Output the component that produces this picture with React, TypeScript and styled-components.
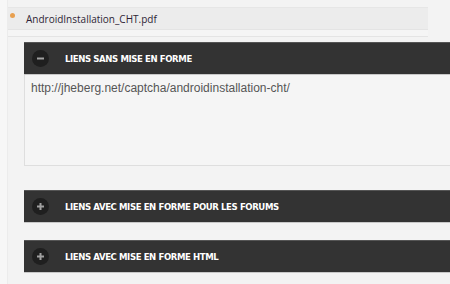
import styled, { createGlobalStyle } from "styled-components";

const GlobalStyle = createGlobalStyle`
    html, body {
        margin: 0;
        padding: 0;
        background: #f3f3f3;
        overflow: hidden;
    }
`;

const Page = styled.div`
    width: 450px;
    height: 284px;
    display: flex;
    background: #f3f3f3;
`;

const Gutter = styled.div`
    width: 7px;
    flex-shrink: 0;
    background: #f7f7f7;
    border-right: 1px solid #ececec;
`;

const Main = styled.div`
    flex: 1;
    display: flex;
    flex-direction: column;
    padding-top: 7px;
`;

const FileRow = styled.div`
    width: 420px;
    height: 21px;
    display: flex;
    align-items: center;
    background: #ececec;
    border-top: 1px solid #e6e6e6;
`;

const Dot = styled.span`
    width: 5px;
    height: 5px;
    border-radius: 50%;
    background: #e8a050;
    margin: 0 11px 0 2px;
    align-self: flex-start;
    margin-top: 5px;
`;

const FileName = styled.span`
    font-family: "Open Sans", sans-serif;
    font-size: 10px;
    color: #2e1f35;
`;

const Strip = styled.div`
    width: 420px;
    height: 6px;
    border-top: 1px solid #e4e4e4;
    border-bottom: 1px solid #e4e4e4;
    background: #f5f5f5;
`;

const Sections = styled.div`
    display: flex;
    flex-direction: column;
    padding-left: 16px;
    padding-top: 5px;
`;

const Header = styled.div<{ $gap?: number }>`
    height: 31px;
    display: flex;
    align-items: center;
    background: #333333;
    border-top: 1px solid #555;
    border-bottom: 1px solid #c8c8c8;
    margin-top: ${(p) => p.$gap ?? 0}px;
`;

const Toggle = styled.span`
    width: 17px;
    height: 17px;
    border-radius: 50%;
    background: #1f1f1f;
    display: flex;
    align-items: center;
    justify-content: center;
    margin: 0 16px 0 8px;
`;

const Title = styled.span`
    font-family: "DejaVu Sans Condensed", "DejaVu Sans", sans-serif;
    font-weight: bold;
    font-size: 9.5px;
    letter-spacing: -0.4px;
    color: #ffffff;
`;

const LinkBox = styled.div`
    height: 78px;
    background: #f5f5f5;
    border-left: 1px solid #dedede;
    border-bottom: 1px solid #dedede;
    padding: 6px 6px;
    font-family: "Liberation Sans", Arial, sans-serif;
    font-size: 12px;
    color: #555555;
`;

function Minus() {
    return (
        <svg width="9" height="9" viewBox="0 0 9 9">
            <rect x="1" y="3.5" width="7" height="2" fill="#a0a0a0" />
        </svg>
    );
}

function Plus() {
    return (
        <svg width="9" height="9" viewBox="0 0 9 9">
            <rect x="1" y="3.5" width="7" height="2" fill="#a0a0a0" />
            <rect x="3.5" y="1" width="2" height="7" fill="#a0a0a0" />
        </svg>
    );
}

export default function App() {
    return (
        <>
            <GlobalStyle />
            <Page>
                <Gutter />
                <Main>
                    <FileRow>
                        <Dot />
                        <FileName>AndroidInstallation_CHT.pdf</FileName>
                    </FileRow>
                    <Strip />
                    <Sections>
                        <Header>
                            <Toggle><Minus /></Toggle>
                            <Title>LIENS SANS MISE EN FORME</Title>
                        </Header>
                        <LinkBox>http://jheberg.net/captcha/androidinstallation-cht/</LinkBox>
                        <Header $gap={24}>
                            <Toggle><Plus /></Toggle>
                            <Title>LIENS AVEC MISE EN FORME POUR LES FORUMS</Title>
                        </Header>
                        <Header $gap={17}>
                            <Toggle><Plus /></Toggle>
                            <Title>LIENS AVEC MISE EN FORME HTML</Title>
                        </Header>
                    </Sections>
                </Main>
            </Page>
        </>
    );
}
